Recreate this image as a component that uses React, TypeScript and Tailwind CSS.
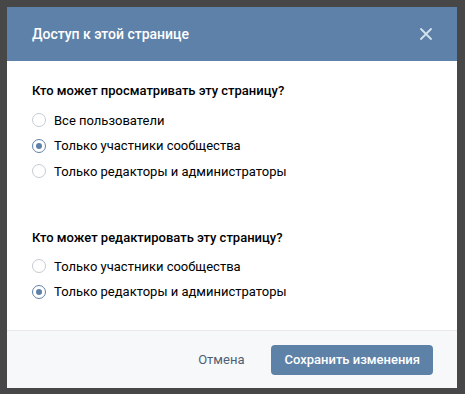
import React from "react";

function Radio({ checked, label }: { checked?: boolean; label: string }) {
  return (
    <div className="flex items-center h-[25.5px]">
      <span
        className={
          "w-[14px] h-[14px] rounded-full border flex items-center justify-center shrink-0 " +
          (checked ? "border-[#5e81a8]" : "border-[#c5ccd3]")
        }
      >
        {checked && <span className="w-[6px] h-[6px] rounded-full bg-[#5e81a8]" />}
      </span>
      <span className="ml-[8px] text-[13px] text-[#000]">{label}</span>
    </div>
  );
}

export default function App() {
  return (
    <div
      className="w-[465px] h-[394px] bg-[#474747] p-[7px] pr-[8px] pb-[6px]"
      style={{ fontFamily: "Roboto, 'Liberation Sans', sans-serif" }}
    >
      <div className="w-full h-full flex flex-col bg-white">
        <div className="h-[54px] bg-[#5d81a8] flex items-center justify-between pl-[25px] pr-[25px]">
          <span className="text-white text-[14px] font-medium">Доступ к этой странице</span>
          <svg width="12" height="12" viewBox="0 0 12 12">
            <path d="M1 1L11 11M11 1L1 11" stroke="#d5e1ee" strokeWidth="1.8" strokeLinecap="round" />
          </svg>
        </div>
        <div className="flex-1 pl-[25px] pt-[20px]">
          <div className="text-[13px] font-medium text-[#000] mb-[7px]">Кто может просматривать эту страницу?</div>
          <Radio label="Все пользователи" />
          <Radio checked label="Только участники сообщества" />
          <Radio label="Только редакторы и администраторы" />
          <div className="h-[44px]" />
          <div className="text-[13px] font-medium text-[#000] mb-[6px]">Кто может редактировать эту страницу?</div>
          <Radio label="Только участники сообщества" />
          <Radio checked label="Только редакторы и администраторы" />
        </div>
        <div className="h-[58px] bg-[#f7f8fa] border-t border-[#e7e8ec] flex items-center justify-end pr-[24px]">
          <span className="text-[13px] text-[#4f5f72] mr-[27px]">Отмена</span>
          <button className="h-[30px] px-[13px] rounded-[4px] bg-[#5e81a8] text-white text-[13px] font-medium">
            Сохранить изменения
          </button>
        </div>
      </div>
    </div>
  );
}
